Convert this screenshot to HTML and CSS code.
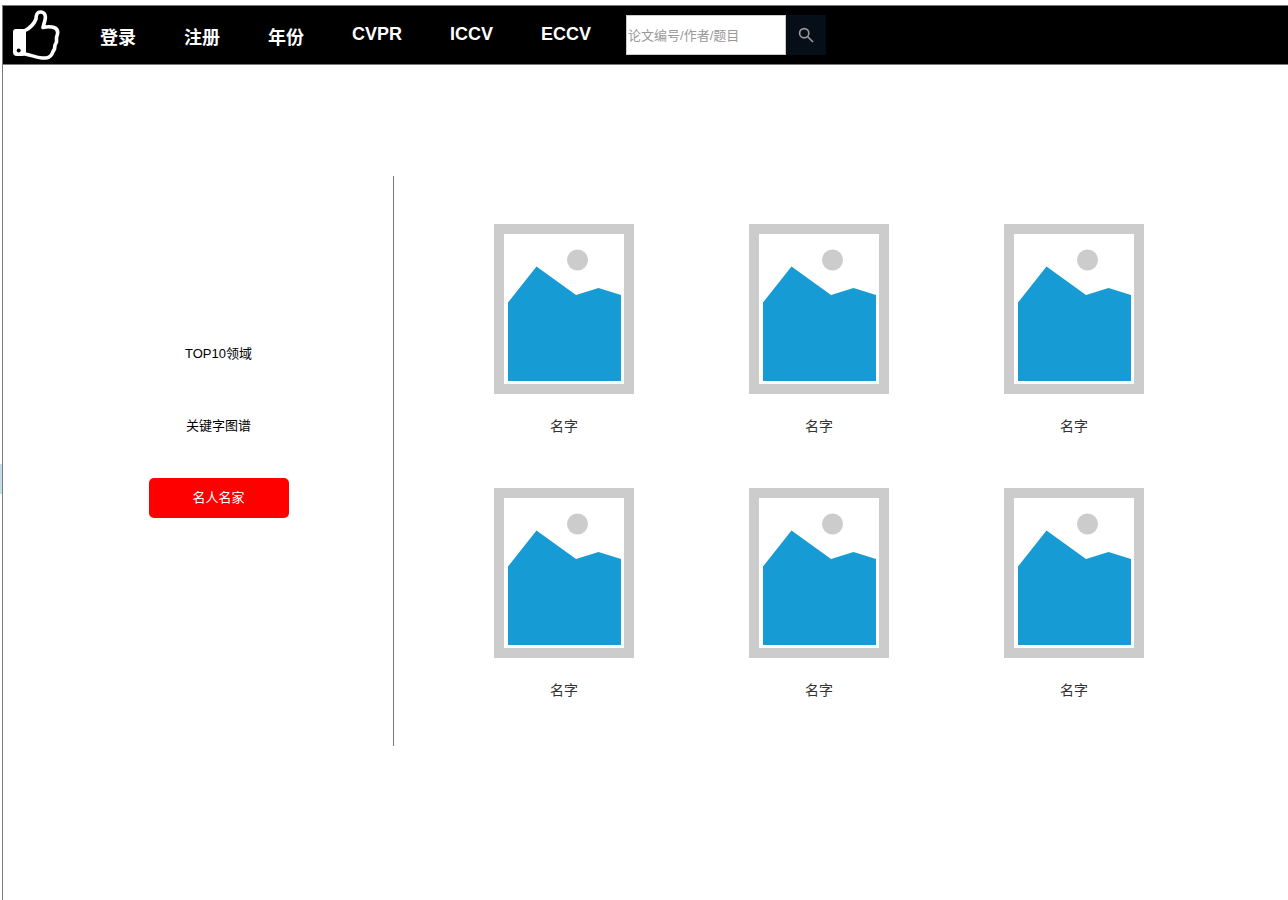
FILE: index.html
```html
<!DOCTYPE html>
<html lang="zh-CN">
<head>
<meta charset="utf-8">
<meta name="viewport" content="width=device-width, initial-scale=1">
<title>名人名家</title>
<link rel="stylesheet" href="styles.css">
</head>
<body>
<svg class="sprite" aria-hidden="true">
  <symbol id="picture" viewBox="0 0 140 170">
    <path fill="#ccc" d="M0 0H140V170H0Z"/>
    <path fill="#fff" d="M10 10H130V160H10Z"/>
    <circle cx="83.500" cy="36" r="10.500" fill="#ccc"/>
    <path fill="#169bd5" d="M14 78.500 42.500 42.500 82 71 104.500 64 127 71V157H14Z"/>
  </symbol>
</svg>
<span class="edge-tab"></span>
<div class="page">
  <header class="topbar">
    <a class="logo" href="#" aria-label="首页">
      <svg viewBox="0 0 48 52" width="48" height="52">
        <path fill="#fff" d="M4 20H11Q14 20 14 23V43Q14 47 10 47H5Q1 47 1 43V23Q1 20 4 20Z"/>
        <path fill="none" stroke="#fff" stroke-width="3.600" stroke-linejoin="round" stroke-linecap="round" d="M13 21.500C18 19 22 15 24 10C24 6 25 3 28.500 3C33 3 34 7 33 11L31 18.500C35 17.500 39 17.500 42 18.500C45 19.500 46 22 45.500 25L44.500 28.500L44.500 33L43 36L42.500 40L41 42.500C40 46 38 48.500 34 49H30C24 48.500 19 46 13 45"/>
        <circle cx="6.700" cy="41.500" r="2" fill="#000"/>
      </svg>
    </a>
    <nav class="nav">
      <a class="nav-link" href="#">登录</a>
      <a class="nav-link" href="#">注册</a>
      <a class="nav-link" href="#">年份</a>
      <a class="nav-link nav-link-latin" href="#">CVPR</a>
      <a class="nav-link nav-link-latin" href="#">ICCV</a>
      <a class="nav-link nav-link-latin" href="#">ECCV</a>
    </nav>
    <form class="search">
      <input class="search-input" type="text" placeholder="论文编号/作者/题目" aria-label="搜索论文">
      <button class="search-button" type="button" aria-label="搜索">
        <svg viewBox="0 0 16 16" width="16" height="16" fill="none" stroke="#999" stroke-width="1.700">
          <circle cx="6.200" cy="6.200" r="4.600"/>
          <path d="M9.500 9.500 15 15"/>
        </svg>
      </button>
    </form>
  </header>
  <main class="content">
    <aside class="sidebar">
      <button class="side-item" type="button">TOP10领域</button>
      <button class="side-item" type="button">关键字图谱</button>
      <button class="side-item side-item-active" type="button">名人名家</button>
    </aside>
    <section class="people">
      <figure class="person"><svg class="portrait"><use href="#picture"/></svg><figcaption class="name">名字</figcaption></figure>
      <figure class="person"><svg class="portrait"><use href="#picture"/></svg><figcaption class="name">名字</figcaption></figure>
      <figure class="person"><svg class="portrait"><use href="#picture"/></svg><figcaption class="name">名字</figcaption></figure>
      <figure class="person"><svg class="portrait"><use href="#picture"/></svg><figcaption class="name">名字</figcaption></figure>
      <figure class="person"><svg class="portrait"><use href="#picture"/></svg><figcaption class="name">名字</figcaption></figure>
      <figure class="person"><svg class="portrait"><use href="#picture"/></svg><figcaption class="name">名字</figcaption></figure>
    </section>
  </main>
</div>
</body>
</html>
```

FILE: styles.css
```css
* {
  box-sizing: border-box;
}

body {
  margin: 0;
  min-height: 100vh;
  padding: 5px 0 0 2px;
  display: flex;
  flex-direction: column;
  background: #fff;
  color: #000;
  font-family: "Liberation Sans", Arial, "Noto Sans CJK SC", sans-serif;
  font-size: 13px;
  line-height: 20px;
}

button,
input {
  font: inherit;
}

.sprite {
  position: absolute;
  width: 0;
  height: 0;
}

.edge-tab {
  position: absolute;
  left: 0;
  top: 464px;
  width: 2px;
  height: 30px;
  background: #c5dcea;
}

.page {
  flex: 1;
  border-left: 1px solid #797979;
}

.topbar {
  display: flex;
  align-items: flex-start;
  height: 60px;
  padding-left: 9px;
  background: #000;
  border-top: 1px solid #797979;
  border-bottom: 1px solid #797979;
}

.logo {
  display: block;
  padding-top: 3px;
}

.logo svg {
  display: block;
}

.nav {
  display: flex;
  align-items: flex-start;
  gap: 48px;
  padding-left: 40px;
}

.nav-link {
  padding-top: 21px;
  color: #fff;
  font-size: 18px;
  font-weight: bold;
  line-height: 22px;
  text-decoration: none;
  white-space: nowrap;
}

.nav-link-latin {
  padding-top: 17px;
}

.search {
  display: flex;
  margin: 9px 0 0 35px;
}

.search-input {
  width: 160px;
  height: 40px;
  padding: 0 1px;
  border: 1px solid #ccc;
  border-radius: 0;
  background: #fff;
  outline: none;
}

.search-input::placeholder {
  color: #999;
  opacity: 1;
}

.search-button {
  display: flex;
  align-items: center;
  justify-content: center;
  width: 40px;
  height: 40px;
  padding: 0;
  border: 0;
  background: #060e18;
}

.content {
  display: flex;
  padding-top: 111px;
}

.sidebar {
  display: flex;
  flex-direction: column;
  align-items: center;
  gap: 32px;
  flex: 0 0 391px;
  padding: 158px 0 0 41px;
  border-right: 1px solid #797979;
}

.side-item {
  width: 140px;
  height: 40px;
  padding: 0;
  border: 0;
  border-radius: 5px;
  background: transparent;
  color: #000;
}

.side-item-active {
  background: #f00;
  color: #fff;
}

.people {
  flex: 1;
  display: grid;
  grid-template-columns: repeat(3, 140px);
  justify-content: space-between;
  row-gap: 52px;
  padding: 48px 144px 46px 100px;
}

.person {
  margin: 0;
}

.portrait {
  display: block;
  width: 140px;
  height: 170px;
}

.name {
  margin-top: 22px;
  color: #333;
  font-size: 14px;
  text-align: center;
}
```
